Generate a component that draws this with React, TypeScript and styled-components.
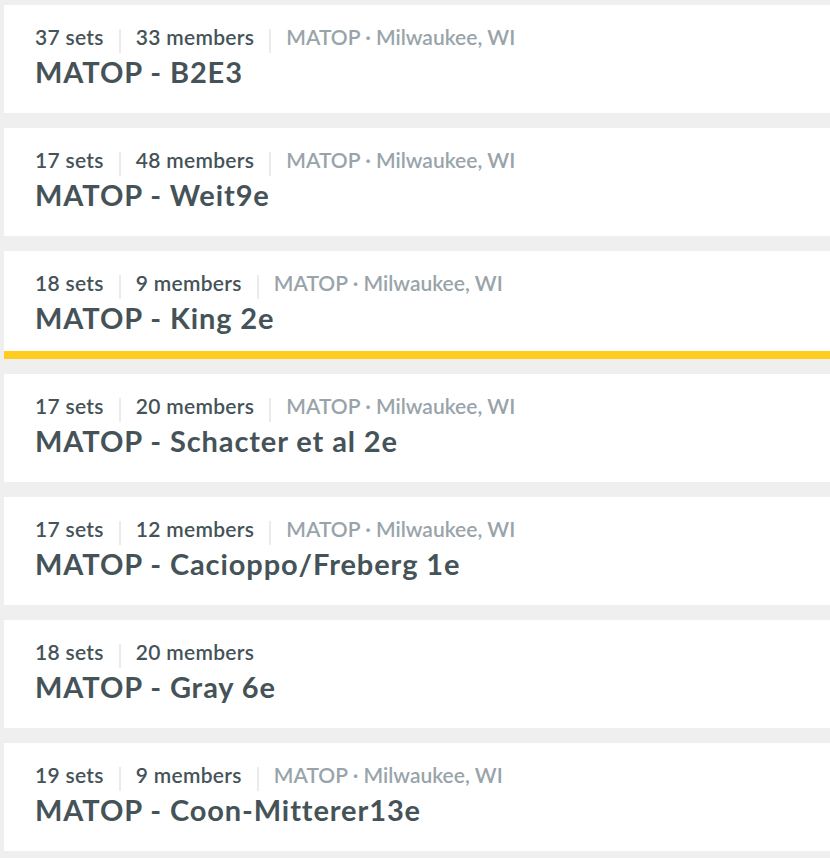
import React from 'react';
import styled, { createGlobalStyle } from 'styled-components';

type ClassItem = {
    sets: number;
    members: number;
    school?: string;
    name: string;
    active?: boolean;
};

const classes: ClassItem[] = [
    { sets: 37, members: 33, school: 'MATOP · Milwaukee, WI', name: 'MATOP - B2E3' },
    { sets: 17, members: 48, school: 'MATOP · Milwaukee, WI', name: 'MATOP - Weit9e' },
    { sets: 18, members: 9, school: 'MATOP · Milwaukee, WI', name: 'MATOP - King 2e', active: true },
    { sets: 17, members: 20, school: 'MATOP · Milwaukee, WI', name: 'MATOP - Schacter et al 2e' },
    { sets: 17, members: 12, school: 'MATOP · Milwaukee, WI', name: 'MATOP - Cacioppo/Freberg 1e' },
    { sets: 18, members: 20, name: 'MATOP - Gray 6e' },
    { sets: 19, members: 9, school: 'MATOP · Milwaukee, WI', name: 'MATOP - Coon-Mitterer13e' },
];

const App = () => {
    return (
        <>
            <GlobalStyle />
            <List>
                {classes.map((c) => (
                    <Card key={c.name} $active={c.active}>
                        <Meta>
                            <MetaText>{c.sets} sets</MetaText>
                            <Divider />
                            <MetaText>{c.members} members</MetaText>
                            {c.school && (
                                <>
                                    <Divider />
                                    <MetaText $muted>{c.school}</MetaText>
                                </>
                            )}
                        </Meta>
                        <Title>{c.name}</Title>
                    </Card>
                ))}
            </List>
        </>
    );
};

const GlobalStyle = createGlobalStyle`
    body {
        margin: 0;
        background: #efefef;
        font-family: Lato, "Open Sans", sans-serif;
        overflow: hidden;
    }
`;

const List = styled.div`
    display: flex;
    flex-direction: column;
    gap: 15px;
    padding: 5px 0 0 4px;
`;

const Card = styled.div<{ $active?: boolean }>`
    box-sizing: border-box;
    height: 108px;
    background: #fff;
    padding: 20px 30px 0 31px;
    border-bottom: ${({ $active }) => ($active ? '8px solid #ffcd1f' : 'none')};
`;

const Meta = styled.div`
    display: flex;
    height: 28px;
    white-space: nowrap;
`;

const MetaText = styled.span<{ $muted?: boolean }>`
    font-size: 21px;
    line-height: 24px;
    font-weight: 600;
    letter-spacing: ${({ $muted }) => ($muted ? '0' : '0.3px')};
    color: ${({ $muted }) => ($muted ? '#99a4aa' : '#455358')};
`;

const Divider = styled.span`
    width: 2px;
    height: 24px;
    margin: 4px 15px 0;
    background: #ebebeb;
`;

const Title = styled.h2`
    margin: 2px 0 0;
    font-size: 29px;
    font-weight: 700;
    letter-spacing: 0.9px;
    color: #455358;
    line-height: 34px;
    white-space: nowrap;
`;

export default App;
